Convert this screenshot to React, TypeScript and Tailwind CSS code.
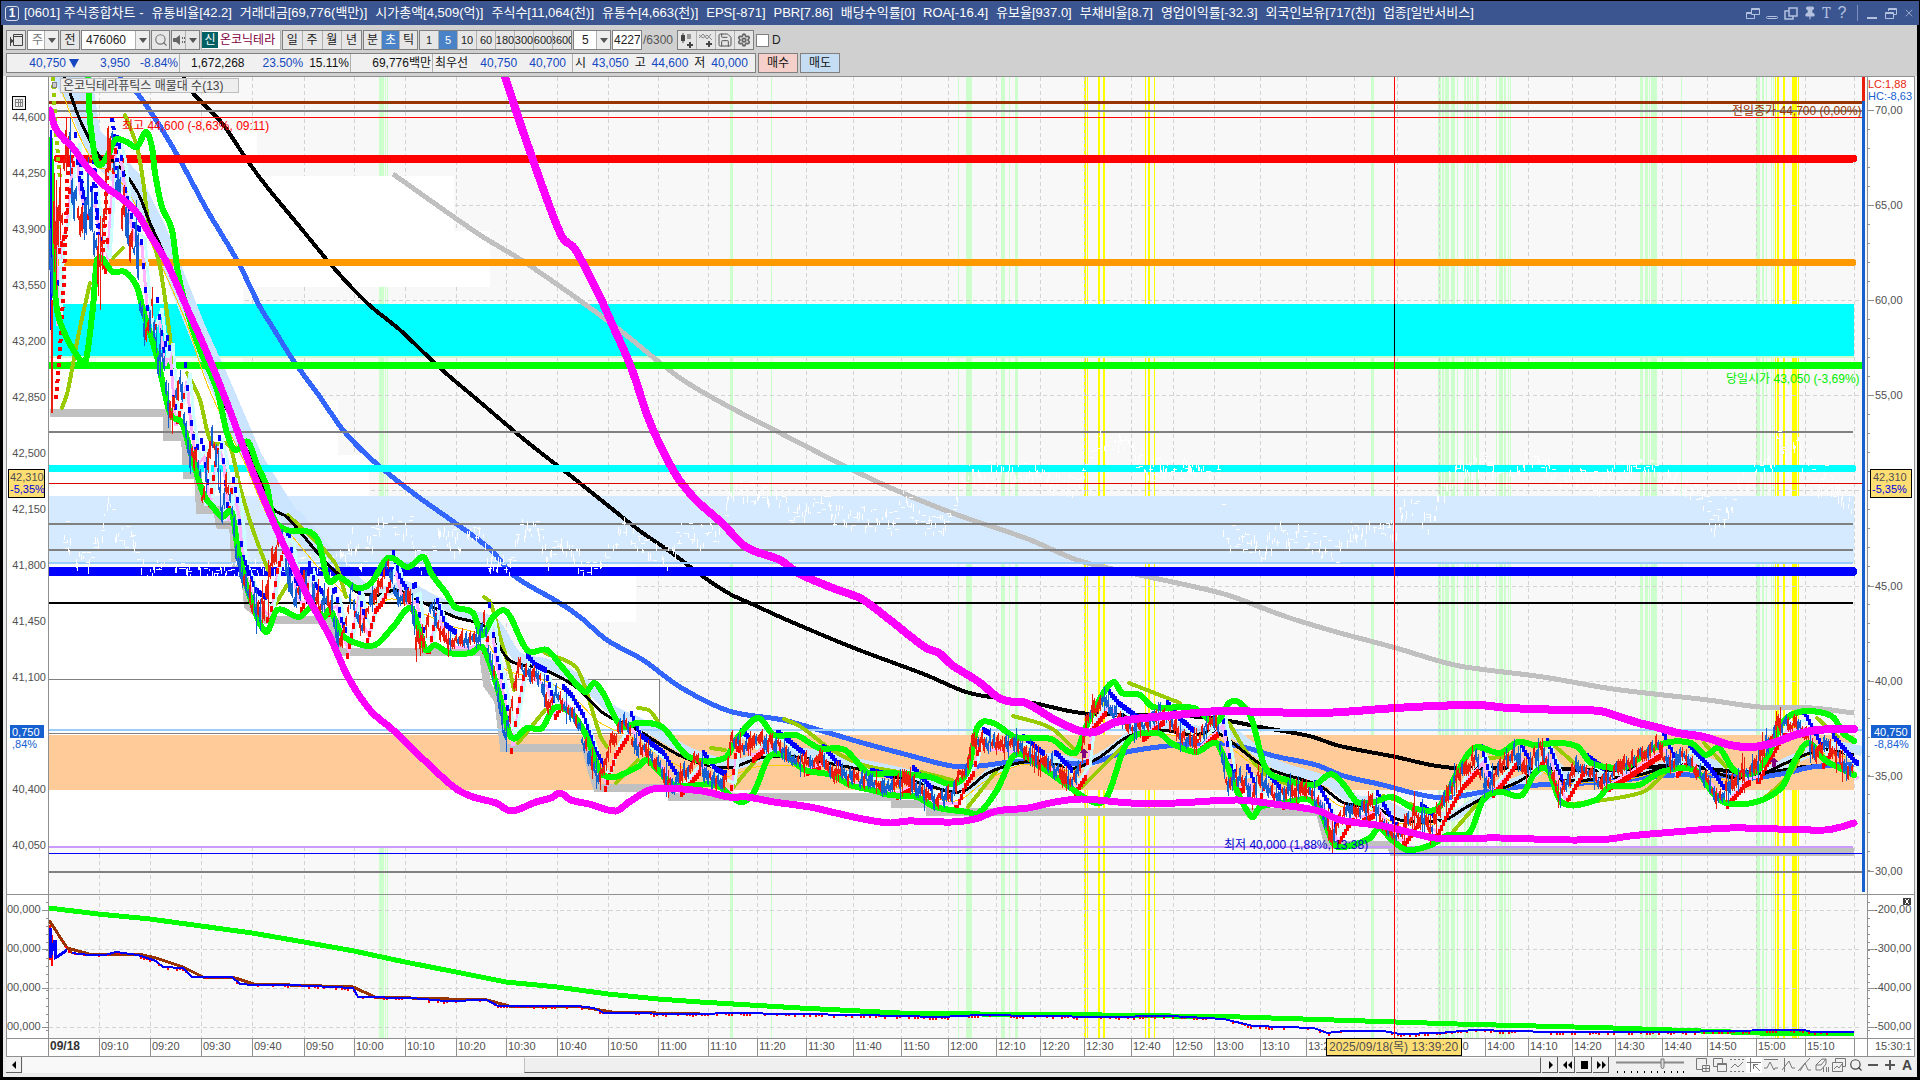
import { useMemo } from 'react';
import type { ReactNode } from 'react';
import { Search, Save, Settings, Pin, X } from 'lucide-react';

type Pt = [number, number];

const FONT = '"Liberation Sans", "Noto Sans CJK KR", sans-serif';

const titleItems = [
  '[0601] 주식종합차트 -',
  '유통비율[42.2]',
  '거래대금[69,776(백만)]',
  '시가총액[4,509(억)]',
  '주식수[11,064(천)]',
  '유통수[4,663(천)]',
  'EPS[-871]',
  'PBR[7.86]',
  '배당수익률[0]',
  'ROA[-16.4]',
  '유보율[937.0]',
  '부채비율[8.7]',
  '영업이익률[-32.3]',
  '외국인보유[717(천)]',
  '업종[일반서비스]',
];

const gridX = [
  99, 150, 201, 252, 304, 354, 405, 456, 506, 557, 608, 658, 708, 757, 806, 853, 901, 948, 996, 1040, 1084,
  1131, 1173, 1214, 1260, 1306, 1354, 1397, 1439, 1485, 1528, 1572, 1615, 1662, 1707, 1756, 1805, 1854,
];
const gridY = [110, 205, 300, 395, 490, 586, 681, 776, 871];
const lowerGridY = [910, 949, 988, 1027];

const greenBars: Pt[] = [
  [379, 5], [385, 1], [387, 1], [730, 3], [771, 1], [958, 1], [966, 6], [1001, 4], [1009, 1], [1015, 3],
  [1371, 3], [1438, 3], [1442, 2], [1445, 4], [1451, 4], [1457, 1], [1464, 2], [1467, 2], [1470, 1],
  [1472, 1], [1476, 3], [1496, 1], [1499, 4], [1504, 2], [1508, 1], [1510, 1], [1640, 3], [1645, 3],
  [1649, 1], [1651, 6], [1681, 1], [1756, 4], [1762, 2], [1766, 1], [1771, 1], [1773, 1],
];
const yellowBars: Pt[] = [
  [1084, 2], [1087, 1], [1098, 2], [1103, 2], [1145, 1], [1148, 2], [1154, 1], [1775, 1], [1777, 2],
  [1783, 2], [1792, 5], [1798, 1],
];

// x end, top, height
const profile: [number, number, number][] = [
  [257, 132, 44], [454, 176, 55], [490, 231, 56], [243, 287, 82], [320, 369, 31], [338, 400, 55],
  [369, 455, 56], [636, 566, 56], [480, 622, 57], [659, 679, 56], [890, 790, 56],
];

// y, width, colour, x end
const levels: [number, number, string, number][] = [
  [101, 3, '#993300', 1862], [110, 2, '#808080', 1862], [117, 1, '#ff0000', 1862],
  [431, 2, '#808080', 1853], [523, 2, '#808080', 1853], [549, 2, '#808080', 1853],
  [562, 2, '#99ccff', 1853], [602, 2, '#000000', 1853], [729, 2, '#99ccff', 1862],
  [846, 2, '#cc99ff', 1853], [853, 1, '#0000ff', 1862], [871, 2, '#808080', 1862],
];
const bands: [number, number, string, number][] = [
  [158, 8, '#ff0000', 1853], [262, 7, '#ff9900', 1853], [365, 7, '#00ff00', 1860],
  [468, 7, '#00ffff', 1853], [571, 9, '#0000ff', 1853],
];

const magentaUpper: Pt[] = [
  [505, 77], [526, 140], [561, 235], [575, 249], [600, 297], [612, 324], [631, 367], [649, 420], [667, 459],
  [680, 481], [696, 500], [722, 523], [746, 547], [780, 560], [798, 573], [830, 587], [860, 598], [872, 606],
  [890, 620], [926, 648], [939, 653],
  [952, 665], [979, 682], [999, 698], [1013, 702], [1026, 703], [1055, 720], [1080, 731], [1095, 732],
  [1113, 723], [1135, 719], [1176, 715], [1220, 711], [1265, 712], [1322, 713], [1396, 708], [1435, 706],
  [1478, 705], [1509, 708], [1565, 710], [1600, 711], [1617, 716], [1639, 723], [1656, 727], [1678, 733],
  [1704, 737], [1730, 745], [1752, 747], [1773, 743], [1795, 735], [1817, 730], [1854, 729],
];
const magentaLower: Pt[] = [
  [50, 110], [55, 127], [63, 138], [73, 148], [87, 167], [107, 188], [120, 197], [137, 213], [150, 235],
  [167, 263], [187, 308], [207, 353], [227, 403], [247, 457], [263, 497], [280, 537], [290, 558], [308, 597],
  [330, 637], [348, 677], [370, 710], [393, 730], [424, 760], [455, 788], [473, 797], [496, 803], [511, 811],
  [536, 802], [551, 798], [560, 793], [571, 800], [589, 804], [616, 811], [629, 802], [653, 789], [702, 791],
  [729, 797], [747, 797], [774, 802], [810, 807], [836, 813], [863, 819], [890, 823], [908, 821], [952, 822],
  [975, 819], [997, 811], [1028, 808], [1055, 802], [1082, 799], [1131, 803], [1176, 803], [1238, 800],
  [1274, 804], [1310, 809], [1322, 812], [1340, 820], [1383, 826], [1413, 833], [1435, 838], [1500, 838],
  [1570, 840], [1609, 839], [1630, 836], [1674, 832], [1730, 828], [1778, 829], [1825, 830], [1841, 827],
  [1854, 823],
];
const grayLong: Pt[] = [
  [393, 174], [480, 235], [526, 263], [612, 324], [686, 382], [784, 435], [882, 484], [955, 514], [1028, 539],
  [1077, 560], [1126, 572], [1224, 594], [1273, 612], [1296, 620], [1340, 633], [1396, 648], [1439, 661],
  [1465, 667], [1543, 677], [1613, 689], [1708, 700], [1760, 707], [1812, 708], [1854, 713],
];
const blackLong: Pt[] = [
  [183, 77], [192, 92], [222, 123], [247, 160], [267, 187], [300, 227], [333, 267], [367, 303], [400, 330],
  [440, 368], [480, 402], [526, 441], [576, 480], [611, 508], [640, 531], [672, 553], [705, 578], [730, 594],
  [752, 604], [787, 620],
  [854, 648], [926, 675], [966, 692], [997, 698], [1033, 703], [1069, 711], [1091, 714], [1158, 715],
  [1211, 718], [1265, 728], [1309, 736], [1340, 746], [1396, 757], [1431, 765], [1457, 768], [1522, 768],
  [1609, 770], [1674, 766], [1739, 772], [1773, 772], [1804, 767], [1854, 765],
];
const blueLong: Pt[] = [
  [118, 77], [137, 93], [158, 123], [180, 160], [207, 210], [238, 262], [260, 307], [270, 323], [293, 360],
  [320, 397], [343, 430], [370, 458], [413, 493], [451, 520], [491, 550], [513, 575], [558, 602], [580, 617],
  [607, 640], [643, 660], [680, 687], [729, 711], [783, 720], [819, 730], [863, 743], [908, 755], [952, 766],
  [979, 766], [1011, 762], [1042, 762], [1069, 763], [1095, 762], [1122, 753], [1167, 746], [1216, 743],
  [1247, 748], [1274, 756], [1316, 765], [1344, 776], [1383, 785], [1413, 793], [1444, 798], [1483, 792],
  [1518, 787], [1552, 784], [1609, 782], [1639, 778], [1674, 775], [1726, 776], [1760, 777], [1786, 773],
  [1812, 767], [1854, 764],
];
const blackShort: Pt[] = [
  [64, 77], [70, 93], [80, 120], [100, 157], [115, 162], [138, 193], [150, 223], [167, 260], [190, 313],
  [213, 380], [247, 450], [272, 507], [287, 517], [322, 558], [339, 575], [357, 592], [379, 595], [397, 590],
  [424, 603], [455, 617], [487, 628], [509, 660], [540, 668], [576, 687], [603, 713], [634, 728], [683, 757],
  [727, 768], [760, 758], [796, 757], [828, 763], [863, 770], [917, 782], [952, 792], [966, 790], [988, 773],
  [1024, 762], [1051, 763], [1075, 768], [1100, 757], [1127, 737], [1158, 730], [1194, 735], [1216, 732],
  [1265, 767], [1310, 782], [1322, 787], [1344, 803], [1374, 807], [1400, 820], [1444, 820], [1465, 808],
  [1492, 793], [1518, 782], [1544, 768], [1561, 780], [1609, 778], [1639, 775], [1674, 765], [1700, 767],
  [1734, 778], [1760, 775], [1786, 763], [1821, 750], [1854, 755],
];
const limeUpper: Pt[] = [
  [88, 77], [90, 120], [97, 163], [108, 155], [115, 140], [127, 142], [137, 147], [146, 132], [152, 147],
  [155, 173], [162, 207], [172, 230], [178, 273], [187, 310], [200, 350], [217, 390], [227, 433], [235, 450],
  [248, 442], [258, 467], [267, 487], [273, 517], [287, 530], [310, 532], [319, 543], [328, 580], [339, 577],
  [357, 588], [371, 583], [388, 558], [408, 567], [424, 557], [431, 573], [446, 593], [455, 607], [473, 613],
  [482, 635], [493, 617], [507, 612], [527, 650], [547, 650], [562, 667], [585, 692], [594, 683], [603, 693],
  [620, 725], [638, 723], [662, 727], [689, 757], [725, 758], [738, 737], [758, 718], [774, 735], [796, 735],
  [819, 748], [845, 750], [868, 773], [890, 773], [930, 777], [952, 784], [968, 770], [977, 728], [993, 723],
  [1015, 737], [1051, 739], [1075, 753], [1086, 727], [1104, 692], [1114, 682], [1122, 693], [1140, 695],
  [1153, 707], [1194, 708], [1216, 723], [1229, 703], [1240, 703], [1252, 720], [1265, 767], [1287, 780],
  [1314, 785], [1331, 774], [1344, 785], [1357, 802], [1374, 802], [1392, 797], [1413, 808], [1435, 810],
  [1444, 800], [1457, 773], [1474, 748], [1500, 753], [1518, 742], [1535, 745], [1557, 743], [1578, 747],
  [1591, 763], [1626, 767], [1643, 755], [1665, 743], [1691, 743], [1706, 755], [1719, 748], [1734, 770],
  [1756, 772], [1769, 753], [1782, 723], [1799, 712], [1819, 712], [1834, 718], [1843, 733], [1854, 741],
];
const limeLower: Pt[] = [
  [50, 140], [52, 213], [55, 293], [62, 327], [80, 360], [86, 360], [93, 307], [97, 260], [113, 272],
  [125, 272], [137, 287], [143, 310], [157, 357], [170, 413], [182, 423], [190, 450], [203, 493], [213, 507],
  [222, 517], [232, 513], [238, 550], [250, 597], [266, 632], [277, 610], [299, 617], [312, 607], [324, 617],
  [330, 610], [341, 633], [353, 642], [375, 645], [393, 627], [411, 608], [420, 633], [426, 650], [435, 645],
  [449, 653], [471, 653], [482, 647], [491, 667], [500, 697], [511, 737], [527, 728], [542, 728], [554, 708],
  [571, 713], [585, 733], [603, 775], [638, 767], [647, 760], [674, 785], [716, 785], [740, 802], [754, 792],
  [769, 757], [787, 757], [805, 770], [832, 775], [850, 785], [872, 790], [890, 795], [917, 797], [935, 807],
  [968, 812], [979, 813], [997, 790], [1015, 755], [1042, 768], [1064, 783], [1093, 802], [1107, 797],
  [1127, 743], [1158, 733], [1171, 743], [1196, 752], [1216, 743], [1225, 760], [1238, 793], [1252, 817],
  [1260, 807], [1283, 803], [1310, 800], [1323, 817], [1333, 843], [1344, 847], [1370, 838], [1379, 828],
  [1392, 840], [1407, 850], [1431, 845], [1448, 835], [1470, 832], [1483, 800], [1500, 792], [1522, 795],
  [1535, 773], [1548, 770], [1561, 802], [1596, 800], [1609, 787], [1639, 785], [1661, 772], [1695, 770],
  [1713, 793], [1726, 803], [1756, 802], [1782, 787], [1795, 760], [1808, 743], [1825, 760], [1854, 775],
];
const olive: Pt[][] = [
  [[125, 115], [137, 147], [143, 180], [148, 220], [160, 267], [167, 313], [173, 363]],
  [[187, 373], [200, 400], [210, 440], [230, 447], [240, 487], [253, 530], [268, 570]],
  [[62, 408], [68, 390], [78, 337], [90, 283]],
  [[113, 258], [123, 248]],
  [[288, 515], [335, 563], [346, 597]],
  [[275, 605], [287, 585]],
  [[484, 597], [491, 604], [500, 637], [509, 667], [514, 690]],
  [[518, 743], [545, 710]],
  [[545, 653], [576, 667], [586, 690], [600, 735], [607, 747]],
  [[616, 783], [638, 760]],
  [[638, 708], [650, 711], [660, 725]],
  [[711, 748], [725, 750]],
  [[731, 790], [756, 760]],
  [[784, 719], [801, 727], [832, 750], [863, 765], [899, 772]],
  [[921, 772], [952, 780]],
  [[968, 807], [997, 770]],
  [[1013, 716], [1051, 728], [1075, 750]],
  [[1082, 787], [1122, 747]],
  [[1129, 683], [1180, 703]],
  [[1229, 723], [1247, 753], [1266, 775], [1288, 784]],
  [[1383, 796], [1413, 805]],
  [[1452, 833], [1483, 797]],
  [[1483, 758], [1509, 757]],
  [[1548, 740], [1574, 763]],
  [[1574, 804], [1643, 792], [1665, 773]],
  [[1704, 743], [1726, 767]],
  [[1760, 802], [1791, 773], [1804, 747]],
  [[1817, 718], [1838, 737]],
];
const lowStep: Pt[] = [
  [50, 413], [167, 413], [167, 437], [185, 437], [187, 475], [198, 475], [200, 510], [217, 510], [220, 525],
  [233, 525], [236, 572], [245, 574], [248, 606], [266, 620], [331, 620], [336, 640], [341, 652], [483, 652],
  [487, 685], [498, 700], [504, 748], [586, 748], [590, 765], [597, 788], [672, 788], [672, 797], [895, 797],
  [895, 804], [930, 804], [930, 812], [1320, 812], [1328, 845], [1391, 845], [1393, 852], [1854, 852],
];
const price: Pt[] = [
  [49, 200], [51, 320], [54, 240], [60, 220], [66, 160], [70, 145], [73, 185], [80, 210], [88, 195], [96, 250],
  [100, 260], [104, 200], [110, 140], [115, 160], [120, 200], [128, 235], [135, 240], [140, 300], [144, 335],
  [152, 310], [158, 360], [163, 345], [169, 420], [175, 400], [180, 375], [184, 420], [190, 460], [197, 450],
  [203, 500], [212, 440], [217, 460], [222, 515], [226, 480], [232, 510], [237, 565], [243, 580], [250, 600],
  [264, 610], [272, 560], [278, 540], [284, 545], [290, 590], [297, 600], [303, 570], [310, 595], [320, 605],
  [330, 600], [336, 630], [342, 645], [348, 615], [352, 590], [357, 620], [362, 630], [370, 600], [378, 590],
  [388, 563], [395, 590], [402, 600], [410, 595], [416, 640], [424, 640], [430, 605], [440, 635], [450, 642],
  [480, 640], [484, 615], [490, 660], [497, 690], [506, 740], [512, 700], [519, 662], [530, 675], [540, 680],
  [548, 710], [556, 695], [566, 705], [578, 725], [590, 760], [600, 778], [610, 745], [625, 722], [635, 745],
  [658, 763], [673, 787], [696, 760], [711, 780], [725, 785], [731, 737], [747, 750], [758, 740], [774, 743],
  [798, 763], [819, 757], [832, 773], [863, 780], [890, 787], [908, 778], [926, 798], [952, 797], [959, 777],
  [968, 763], [973, 737], [984, 743], [1019, 747], [1037, 763], [1051, 763], [1069, 783], [1080, 767],
  [1086, 720], [1102, 700], [1113, 713], [1136, 730], [1160, 710], [1176, 730], [1191, 743], [1216, 720],
  [1227, 783], [1243, 777], [1252, 800], [1258, 777], [1274, 797], [1296, 790], [1312, 793], [1323, 813],
  [1331, 837], [1346, 810], [1357, 810], [1372, 803], [1390, 835], [1400, 833], [1413, 813], [1431, 827],
  [1444, 800], [1457, 777], [1476, 757], [1485, 787], [1500, 770], [1513, 750], [1524, 770], [1541, 748],
  [1559, 795], [1578, 763], [1600, 780], [1622, 767], [1658, 743], [1669, 767], [1682, 753], [1704, 777],
  [1719, 798], [1741, 773], [1754, 770], [1762, 753], [1778, 725], [1799, 722], [1817, 757], [1825, 743],
  [1851, 773],
];
const turnover: Pt[] = [
  [49, 908], [98, 914], [150, 919], [201, 926], [252, 933], [304, 942], [354, 951], [405, 962], [456, 972],
  [506, 982], [557, 987], [608, 994], [658, 999], [700, 1002], [800, 1008], [900, 1013], [980, 1014],
  [1102, 1015], [1240, 1017], [1396, 1022], [1457, 1024], [1613, 1028], [1760, 1033], [1854, 1033],
];
const flow: Pt[] = [
  [49, 920], [67, 948], [72, 953], [89, 955], [105, 955], [116, 952], [138, 955], [156, 961], [163, 967],
  [183, 968], [192, 977], [232, 977], [240, 984], [254, 985], [290, 985], [353, 988], [358, 997], [411, 998],
  [446, 1001], [487, 1000], [498, 1006], [576, 1006], [594, 1008], [604, 1013], [700, 1014], [730, 1013],
  [860, 1015], [940, 1017], [980, 1015], [1102, 1017], [1170, 1016], [1224, 1019], [1253, 1026], [1314, 1028],
  [1327, 1033], [1344, 1031], [1383, 1031], [1400, 1034], [1439, 1033], [1474, 1030], [1552, 1032],
  [1674, 1032], [1778, 1030], [1804, 1030], [1812, 1032], [1854, 1032],
];
const slowFlow: Pt[] = [
  [49, 920], [67, 948], [89, 954], [138, 954], [156, 958], [183, 967], [203, 977], [232, 977], [254, 984],
  [290, 985], [353, 987], [375, 997], [411, 998], [487, 1000], [509, 1006], [576, 1006], [612, 1012], [700, 1014],
];
const traceLine: Pt[] = [
  [49, 575], [62, 560], [66, 530], [72, 550], [90, 560], [104, 520], [109, 500], [116, 540], [130, 535],
  [140, 565], [180, 572], [230, 570], [300, 565], [345, 560], [352, 535], [360, 560], [375, 530], [388, 505],
  [400, 535], [410, 520], [418, 560], [430, 560], [440, 530], [460, 545], [480, 530], [488, 558], [510, 562],
  [520, 525], [538, 530], [548, 560], [560, 540], [575, 555], [595, 572], [610, 545], [625, 525], [640, 545],
  [672, 556], [680, 525], [700, 535], [722, 530], [728, 495], [740, 488], [780, 495], [790, 512], [800, 515],
  [822, 500], [835, 515], [870, 515], [895, 522], [903, 500], [925, 525], [945, 522], [952, 500], [970, 470],
  [1000, 474], [1030, 466], [1060, 485], [1080, 480], [1100, 440], [1120, 440], [1150, 470], [1190, 466],
  [1218, 470], [1224, 530], [1240, 540], [1262, 550], [1280, 530], [1300, 535], [1320, 545], [1335, 555],
  [1350, 530], [1380, 530], [1395, 525], [1410, 500], [1430, 520], [1450, 475], [1480, 460], [1510, 475],
  [1530, 460], [1560, 475], [1600, 480], [1645, 462], [1660, 465], [1667, 480], [1690, 485], [1705, 502],
  [1713, 523], [1730, 502], [1740, 485], [1755, 468], [1772, 465], [1778, 440], [1790, 455], [1798, 442],
  [1802, 465], [1812, 470], [1818, 490], [1825, 475], [1840, 495], [1853, 505],
];

const axisTimes = [
  '09:10', '09:20', '09:30', '09:40', '09:50', '10:00', '10:10', '10:20', '10:30', '10:40', '10:50', '11:00',
  '11:10', '11:20', '11:30', '11:40', '11:50', '12:00', '12:10', '12:20', '12:30', '12:40', '12:50', '13:00',
  '13:10', '13:20', '13:30', '13:40', '13:50', '14:00', '14:10', '14:20', '14:30', '14:40', '14:50', '15:00',
  '15:10',
];
const leftPrices = [
  '44,600', '44,250', '43,900', '43,550', '43,200', '42,850', '42,500', '42,150', '41,800', '41,450', '41,100',
  '', '40,400', '40,050',
];
const rightPrices = ['70,00', '65,00', '60,00', '55,00', '', '45,00', '40,00', '35,00', '30,00'];

function line(points: Pt[]) {
  return points.map(([x, y]) => `${x},${y}`).join(' ');
}

function curve(points: Pt[]) {
  let d = `M${points[0][0]} ${points[0][1]}`;
  for (let i = 1; i < points.length; i++) {
    const before = points[i - 2] ?? points[i - 1];
    const from = points[i - 1];
    const to = points[i];
    const after = points[i + 1] ?? to;
    const step = (to[0] - from[0]) / 3;
    const k0 = (to[1] - before[1]) / (to[0] - before[0] || 1);
    const k1 = (after[1] - from[1]) / (after[0] - from[0] || 1);
    d += `C${from[0] + step} ${from[1] + k0 * step} ${to[0] - step} ${to[1] - k1 * step} ${to[0]} ${to[1]}`;
  }
  return d;
}

function random(seed: number) {
  let s = seed;
  return () => {
    s = (s * 1664525 + 1013904223) % 4294967296;
    return s / 4294967296;
  };
}

function at(points: Pt[], x: number) {
  for (let i = 1; i < points.length; i++) {
    if (x <= points[i][0]) {
      const [x0, y0] = points[i - 1];
      const [x1, y1] = points[i];
      return y0 + ((x - x0) / (x1 - x0 || 1)) * (y1 - y0);
    }
  }
  return points[points.length - 1][1];
}

function buildCandles() {
  const rnd = random(7);
  const out = { upBody: '', downBody: '', upWick: '', downWick: '', above: '', below: '' };
  for (let x = 50; x < 1853; x += 2) {
    const y = at(price, x);
    const slope = at(price, x + 4) - at(price, x - 4);
    const amp = x < 140 ? 66 : x < 350 ? 26 : 16;
    const mid = y + (rnd() - 0.5) * amp * 0.6;
    const half = 2 + rnd() * amp * 0.3;
    const tail = half + (rnd() > 0.7 ? rnd() * amp * 0.8 : 2);
    const top = Math.max(118, Math.round(mid - tail));
    const body = `M${x} ${Math.round(Math.max(120, mid - half))}V${Math.round(mid + half)}`;
    const wick = `M${x}.5 ${top}V${Math.round(mid + tail)}`;
    if (rnd() > 0.45 + slope / 120) {
      out.upBody += body;
      out.upWick += wick;
    } else {
      out.downBody += body;
      out.downWick += wick;
    }
    if (slope > 2) out.above += `M${x + 5} ${Math.round(y - 13)}v6`;
    if (slope < -2) out.below += `M${x + 5} ${Math.round(y + 8)}v6`;
  }
  return out;
}

function buildTrace() {
  const rnd = random(31);
  let d = '';
  for (let x = 60; x < 1853; x += 1) {
    if (rnd() < 0.35) continue;
    const y = Math.round(at(traceLine, x) + (rnd() - 0.5) * 22);
    d += rnd() > 0.7 ? `M${x} ${y}h4` : `M${x}.5 ${y}v${Math.round(rnd() * 7 + 2)}`;
  }
  return d;
}

function buildFlowNoise() {
  const rnd = random(11);
  let d = 'M50 925V960M52 935V966';
  for (let x = 54; x < 1853; x += 3) {
    const y = Math.round(at(flow, x));
    d += `M${x} ${y}v${Math.round((rnd() - 0.3) * 5)}`;
  }
  return d;
}

function Chart() {
  const candles = useMemo(buildCandles, []);
  const trace = useMemo(buildTrace, []);
  const flowNoise = useMemo(buildFlowNoise, []);
  const cloud = blackShort.map(([x, y]): Pt => [x + 8, y - 4]);
  const gold = blackShort.map(([x, y]): Pt => [x - 4, x < 1000 ? y + 9 : y + 3]);
  const pricePink = price.map(([x, y]): Pt => [x + 7, y + 6]);
  const priceCyan = price.map(([x, y]): Pt => [x + 10, y - 2]);

  return (
    <svg
      viewBox="6 76 1909 981"
      className="block h-auto w-full bg-white"
      fontFamily={FONT}
      fontSize="11"
      fill="none"
      shapeRendering="crispEdges"
      role="img"
      aria-label="온코닉테라퓨틱스 차트"
    >
      <clipPath id="plot">
        <rect x="49" y="77" width="1813" height="961" />
      </clipPath>
      <rect x="49" y="77" width="1818" height="961" fill="#f8f8f8" />

      <g clipPath="url(#plot)">
        {greenBars.map(([x, w]) => (
          <rect key={x} x={x} y="77" width={w} height="961" fill="#ccffcc" />
        ))}
        {yellowBars.map(([x, w]) => (
          <rect key={x} x={x} y="77" width={w} height="961" fill="#ffff00" />
        ))}
        <g stroke="#d3d3d3" strokeDasharray="4 3">
          {gridX.map((x) => (
            <path key={x} d={`M${x}.5 77V1038`} />
          ))}
          {[...gridY, ...lowerGridY].map((y) => (
            <path key={y} d={`M49 ${y}.5H1867`} />
          ))}
        </g>

        {profile.map(([x, y, h]) => (
          <rect key={y} x="49" y={y} width={x - 49} height={h} fill="#ffffff" />
        ))}
        <rect x="53" y="304" width="1801" height="52" fill="#00ffff" />
        <rect x="49" y="356" width="1805" height="2" fill="#ccffcc" />
        <rect x="49" y="496" width="1805" height="67" fill="#d6eaff" />
        <path d="M49 679.5H659.5V733.5H49" stroke="#808080" />
        <rect x="49" y="735" width="1805" height="55" fill="#ffcc99" />

        <path d="M52 77H92L100 130L140 175L165 225L205 325L230 380L262 455L290 500L330 560L300 545L270 505L240 455L205 375L165 275L135 205L90 160L70 110Z" fill="#cbe4ff" />
        <polyline points={line(lowStep)} stroke="#c0c0c0" strokeWidth="8" />
        <path d={curve(cloud.slice(12))} stroke="#cbe4ff" strokeWidth="10" />
        <path d={curve(grayLong)} stroke="#c0c0c0" strokeWidth="5" />
        <path d={curve(blackLong)} stroke="#000000" strokeWidth="4" />
        <path d={curve(blueLong)} stroke="#3366ff" strokeWidth="5" />
        {levels.map(([y, w, color, end]) => (
          <rect key={y} x="49" y={y} width={end - 49} height={w} fill={color} />
        ))}
        {bands.map(([y, w, color, end]) => (
          <path key={y} d={`M${y === 158 ? 58 : 49} ${y}.5H${end}`} stroke={color} strokeWidth={w} strokeLinecap="round" />
        ))}
        <path d={trace} stroke="#ffffff" />

        <path d={curve(gold)} stroke="#ffcc00" strokeWidth="1" />
        {olive.map((points) => (
          <path key={points[0].join()} d={curve(points)} stroke="#99cc00" strokeWidth="4" strokeLinecap="round" />
        ))}
        <path d="M53 77L55 120L60 180" stroke="#99cc00" strokeWidth="4" strokeDasharray="4 4" />
        <path d={curve(blackShort)} stroke="#000000" strokeWidth="3" />
        <polyline points={line(pricePink)} stroke="#ffb3ff" strokeWidth="3" />
        <polyline points={line(priceCyan)} stroke="#ccffff" strokeWidth="3" />
        <path d="M68 155L67 200L63 300L60 350L56 400M108 160L105 220L102 265" stroke="#ff0000" strokeWidth="4" strokeDasharray="4 4" />
        <path d="M80 155L82 190L84 205M94 160L96 195L98 235M112 118L116 145L118 190" stroke="#0000ff" strokeWidth="4" strokeDasharray="4 4" />
        <path d={candles.above} stroke="#0000ff" strokeWidth="3" />
        <path d={candles.below} stroke="#ff0000" strokeWidth="3" />
        <g strokeLinejoin="round" strokeLinecap="round">
          <path d={curve(limeLower)} stroke="#00ff00" strokeWidth="6" />
          <path d={curve(limeUpper)} stroke="#00ff00" strokeWidth="6" />
        </g>
        <path d="M50.5 130V330" stroke="#0000ff" strokeWidth="2" />
        <path d="M52 300V413" stroke="#e91e0c" strokeWidth="2" />
        <path d={candles.upBody} stroke="#e91e0c" strokeWidth="2" />
        <path d={candles.downBody} stroke="#1660d0" strokeWidth="2" />
        <path d={candles.upWick} stroke="#e91e0c" />
        <path d={candles.downWick} stroke="#1660d0" />
        <g strokeLinejoin="round" strokeLinecap="round">
          <path d={curve(magentaLower)} stroke="#ff00ff" strokeWidth="7" />
          <path d={curve(magentaUpper)} stroke="#ff00ff" strokeWidth="8" />
          <path d="M700 571.5H1853" stroke="#0000ff" strokeWidth="9" />
        </g>
        <path d="M1084 748l4 5h-2v5h-4v-5h-2zM1774 757l4 5h-2v5h-4v-5h-2z" fill="#800080" />
        <rect x="49" y="483" width="1813" height="1" fill="#e00000" />

        <polyline points={line(turnover)} stroke="#00ff00" strokeWidth="5" />
        <polyline points={line(slowFlow)} stroke="#993300" strokeWidth="3" />
        <polyline points={line(flow)} stroke="#993300" strokeWidth="2" />
        <path d={flowNoise} stroke="#ff0000" strokeWidth="2" />
        <path d="M50 928V958L55 940V958L60 955L67 950" stroke="#0000ff" strokeWidth="3" />
        <polyline points={line(flow.slice(2))} stroke="#0000ff" strokeWidth="2" />
        <rect x="1394" y="77" width="1" height="961" fill="#ff0000" />
        <rect x="1394" y="304" width="1" height="52" fill="#000000" />

        <g fontSize="12">
          <text x="122" y="130" fill="#ff0000">최고 44,600 (-8,63%, 09:11)</text>
          <text x="1732" y="115" fill="#993300">전일종가 44,700 (0,00%)</text>
          <text x="1726" y="383" fill="#00ee00">당일시가 43,050 (-3,69%)</text>
          <text x="1224" y="849" fill="#0000cc">최저 40,000 (1,88%, 13:38)</text>
        </g>
        <rect x="60.5" y="78.5" width="178" height="14" fill="#eeeeee" stroke="#bdbdbd" />
        <text x="63" y="90" fontSize="12" fill="#444444">온코닉테라퓨틱스 매물대 수(13)</text>
        <rect x="52.5" y="82.5" width="4" height="5" fill="#cccccc" stroke="#808080" />
      </g>

      <rect x="1862" y="77" width="3" height="24" fill="#e91e0c" />
      <rect x="1862" y="101" width="3" height="791" fill="#1660d0" />
      <g fill="#909090">
        <rect x="6" y="76" width="1909" height="1" />
        <rect x="6" y="76" width="1" height="981" />
        <rect x="1914" y="76" width="1" height="981" />
        <rect x="48" y="77" width="1" height="979" />
        <rect x="1867" y="77" width="1" height="979" />
        <rect x="6" y="894" width="1909" height="1" />
        <rect x="6" y="1038" width="1909" height="1" />
        <rect x="6" y="1056" width="1909" height="1" />
        {gridX.map((x) => (
          <rect key={x} x={x} y="1038" width="1" height="18" />
        ))}
        {gridY.map((y) => (
          <rect key={y} x="1867" y={y} width="7" height="1" />
        ))}
        {Array.from({ length: 41 }, (_, i) => (
          <rect key={i} x="1867" y={110 + i * 19} width="3" height="1" />
        ))}
        {lowerGridY.map((y) => (
          <g key={y}>
            <rect x="42" y={y} width="7" height="1" />
            <rect x="1867" y={y} width="7" height="1" />
          </g>
        ))}
        {Array.from({ length: 18 }, (_, i) => (
          <g key={i}>
            <rect x="46" y={902 + i * 8} width="3" height="1" />
            <rect x="1867" y={902 + i * 8} width="3" height="1" />
          </g>
        ))}
      </g>

      <g fill="#505050">
        {leftPrices.map((t, i) => (
          <text key={t} x="46" y={121 + i * 56} textAnchor="end">{t}</text>
        ))}
        {rightPrices.map((t, i) => (
          <text key={gridY[i]} x="1875" y={gridY[i] + 4}>{t}</text>
        ))}
        {['-200,00', '-300,00', '-400,00', '-500,00'].map((t, i) => (
          <g key={t}>
            <text x="7" y={lowerGridY[i] + 3}>00,000</text>
            <text x="1874" y={lowerGridY[i] + 3}>{t}</text>
          </g>
        ))}
        <text x="50" y="1050" fontSize="12" fontWeight="bold" fill="#333333">09/18</text>
        {axisTimes.map((t, i) => (
          <text key={t} x={gridX[i] + 2} y="1050">{t}</text>
        ))}
        <text x="1875" y="1050">15:30:1</text>
      </g>
      <text x="1868" y="88" fill="#e91e0c">LC:1,88</text>
      <text x="1868" y="100" fill="#1660d0">HC:-8,63</text>

      <g>
        <rect x="12.5" y="96.5" width="13" height="13" fill="#f0f0f0" stroke="#000000" />
        <path d="M15.5 99.5h7v7h-7zM15.5 102.5h7M18.5 99.5v7M20.5 99.5v7" stroke="#808080" />
        <rect x="8.5" y="469.5" width="36" height="28" fill="#ffdf74" stroke="#000000" />
        <text x="10" y="481" fill="#505050">42,310</text>
        <text x="10" y="493" fill="#0000e0">-5,35%</text>
        <rect x="1870.5" y="469.5" width="41" height="28" fill="#ffdf74" stroke="#000000" />
        <text x="1873" y="481" fill="#505050">42,310</text>
        <text x="1872" y="493" fill="#0000e0">-5,35%</text>
        <rect x="10" y="725" width="34" height="13" fill="#1660d0" />
        <text x="12" y="736" fill="#ffffff">0,750</text>
        <text x="12" y="748" fill="#1660d0">,84%</text>
        <rect x="1871" y="725" width="40" height="13" fill="#1660d0" />
        <text x="1874" y="736" fill="#ffffff">40,750</text>
        <text x="1874" y="748" fill="#1660d0">-8,84%</text>
        <rect x="1903" y="898" width="8" height="7" fill="#404040" />
        <path d="M1905 899l4 5M1909 899l-4 5" stroke="#ffffff" />
        <rect x="1326.5" y="1038.5" width="135" height="17" fill="#ffdf74" stroke="#000000" />
        <text x="1329" y="1051" fontSize="12" fill="#505050">2025/09/18(목) 13:39:20</text>
      </g>
    </svg>
  );
}

function ToolButton({ children, active, label }: { children: ReactNode; active?: boolean; label?: string }) {
  return (
    <button
      aria-label={label}
      className={`flex h-full min-w-0 flex-1 items-center justify-center overflow-hidden border-r border-[#b0b0b0] whitespace-nowrap last:border-r-0 ${
        active ? 'bg-[#4a82c8] text-white' : 'bg-[#e6e6e6]'
      }`}
    >
      {children}
    </button>
  );
}

function Group({ className, children }: { className: string; children: ReactNode }) {
  return <div className={`flex h-5 shrink-0 border border-[#808080] bg-[#e6e6e6] ${className}`}>{children}</div>;
}

function Arrow() {
  return (
    <svg viewBox="0 0 8 5" className="h-[5px] w-2 shrink-0" aria-hidden="true">
      <path d="M0 0h8L4 5z" fill="#555" />
    </svg>
  );
}

function Combo({ value, label, className }: { value: string; label: string; className: string }) {
  return (
    <div className={`relative h-5 shrink-0 border border-[#808080] bg-white ${className}`}>
      <select aria-label={label} className="h-full w-full appearance-none bg-transparent pl-1 outline-none">
        <option>{value}</option>
      </select>
      <span className="pointer-events-none absolute inset-y-0 right-0 flex w-[14px] items-center justify-center border-l border-[#b0b0b0] bg-[#eeeeee]">
        <Arrow />
      </span>
    </div>
  );
}

function TopBar() {
  return (
    <header className="flex h-6 items-center bg-[#3a5590] px-1 text-white">
      <span className="flex h-[15px] w-[14px] items-center justify-center rounded-[3px] border border-white/80 text-xs font-bold">1</span>
      <h1 className="ml-[5px] flex gap-2 text-[13px] whitespace-nowrap">
        {titleItems.map((t) => (
          <span key={t}>{t}</span>
        ))}
      </h1>
      <div className="ml-auto flex items-center gap-[5px] text-[#b4c2e0]">
        <button aria-label="분리">
          <svg viewBox="0 0 14 13" className="h-[13px] w-[14px]" fill="none" stroke="currentColor">
            <path d="M5.5 1.5h8v6h-8zM5 2.500h8M5 5.500h-4.500v6h8v-4M1 6.500h4" />
          </svg>
        </button>
        <button aria-label="접기">
          <svg viewBox="0 0 14 13" className="h-[13px] w-[14px]" fill="none" stroke="currentColor">
            <rect x="1.500" y="9.500" width="11" height="2" rx="1" />
          </svg>
        </button>
        <button aria-label="복사">
          <svg viewBox="0 0 14 13" className="h-[13px] w-[14px]" fill="none" stroke="currentColor" strokeWidth="1.500">
            <path d="M5 1h8v8H5zM5 4H1v8h8V9" />
          </svg>
        </button>
        <button aria-label="고정"><Pin className="h-[14px] w-[14px] fill-current" /></button>
        <button className="font-serif text-base leading-none">T</button>
        <button className="w-3 text-base leading-none">?</button>
        <span className="mx-1 h-4 w-px bg-[#7d90bd]" />
        <button aria-label="최소화" className="flex h-3 w-3 items-end"><span className="h-0.5 w-[10px] bg-current" /></button>
        <button aria-label="이전 크기로">
          <svg viewBox="0 0 14 13" className="h-[13px] w-[14px]" fill="none" stroke="currentColor">
            <path d="M4.500 4V1.500h8v6H10M4 2.500h9M1.500 5.500h8v6h-8zM1 6.500h9" />
          </svg>
        </button>
        <button aria-label="닫기"><X className="h-3 w-3" strokeWidth={1.5} /></button>
      </div>
    </header>
  );
}

function Toolbar() {
  return (
    <div className="flex h-5 items-center gap-px text-xs text-[#222]">
      <Group className="w-5">
        <ToolButton label="메뉴">
          <svg viewBox="0 0 14 14" className="h-[14px] w-[14px]" fill="none" stroke="#444">
            <path d="M4.500 1.500h9v11h-9zM4 3.500h9M1.500 4v9" />
            <path d="M1 5l4 3-4 3z" fill="#444" stroke="none" />
          </svg>
        </ToolButton>
      </Group>
      <Combo value="주" label="종목 구분" className="w-8 text-[#777]" />
      <Group className="w-5"><ToolButton>전</ToolButton></Group>
      <Combo value="476060" label="종목 코드" className="w-[69px]" />
      <Group className="w-[19px]"><ToolButton label="검색"><Search className="h-[14px] w-[14px] text-[#777]" /></ToolButton></Group>
      <Group className="w-[29px]">
        <ToolButton label="소리">
          <svg viewBox="0 0 14 12" className="h-3 w-[14px] shrink-0"><path d="M1 4h3l4-3v10L4 8H1zM10 3h1v2h-1zM10 7h1v2h-1zM12 3h1v2h-1zM12 7h1v2h-1z" fill="#666" /></svg>
        </ToolButton>
        <ToolButton label="소리 옵션"><Arrow /></ToolButton>
      </Group>
      <div className="flex h-5 w-20 shrink-0 items-center overflow-hidden border border-[#b0b0b0] bg-white whitespace-nowrap text-[#800040]">
        <span className="flex h-4 w-4 shrink-0 items-center justify-center bg-[#006064] text-white">신</span>
        <span className="pl-0.5">온코닉테라</span>
      </div>
      <Group className="w-20">
        {['일', '주', '월', '년'].map((t) => <ToolButton key={t}>{t}</ToolButton>)}
      </Group>
      <Group className="w-[55px]">
        {['분', '초', '틱'].map((t) => <ToolButton key={t} active={t === '초'}>{t}</ToolButton>)}
      </Group>
      <Group className="w-[153px] text-[11px]">
        {['1', '5', '10', '60', '180', '300', '600', '3600'].map((t) => (
          <ToolButton key={t} active={t === '5'}>{t}</ToolButton>
        ))}
      </Group>
      <Combo value="5" label="간격" className="w-[38px] pl-1" />
      <input aria-label="표시 개수" defaultValue="4227" className="h-5 w-[30px] border border-[#808080] bg-white px-px outline-none" />
      <span className="w-[33px] text-[#555]">/6300</span>
      <Group className="w-[77px]">
        <ToolButton label="차트 추가">
          <svg viewBox="0 0 16 16" className="h-4 w-4"><path d="M2 3h4v6H2zM3.500 1h1v10h-1zM10 10h2v2h2v2h-2v2h-2v-2H8v-2h2z" fill="#444" /><path d="M8 2h4v5H8z" fill="#999" /></svg>
        </ToolButton>
        <ToolButton label="지표 추가">
          <svg viewBox="0 0 16 16" className="h-4 w-4" fill="none"><path d="M1 6l4-4 4 5 4-5M1 3l4 3 4-3 5 5" stroke="#888" /><path d="M10 9h2v2h2v2h-2v2h-2v-2H8v-2h2z" fill="#444" /></svg>
        </ToolButton>
        <ToolButton label="저장"><Save className="h-4 w-4 text-[#555]" strokeWidth={1.5} /></ToolButton>
        <ToolButton label="설정"><Settings className="h-[14px] w-[14px] text-[#666]" strokeWidth={3} /></ToolButton>
      </Group>
      <label className="ml-px flex items-center gap-[3px]">
        <input type="checkbox" className="h-[13px] w-[13px] appearance-none border border-[#808080] bg-white" />
        D
      </label>
    </div>
  );
}

function QuoteBar() {
  const blue = 'text-[#1548c0]';
  return (
    <div className="flex h-5 items-center gap-0.5 text-xs whitespace-nowrap text-[#111]">
      <div className="flex h-5 w-[750px] shrink-0 border border-[#808080] bg-[#f0f0f0] leading-[18px]">
        <div className={`flex w-[173px] justify-end border-r border-[#b0b0b0] pr-px ${blue}`}>
          <span>40,750</span>
          <span className="flex w-4 items-center justify-center">
            <svg viewBox="0 0 10 9" className="h-[9px] w-[10px]"><path d="M0 0h10L5 9z" fill="#1548c0" /></svg>
          </span>
          <span className="w-12 text-right">3,950</span>
          <span className="w-12 text-right">-8.84%</span>
        </div>
        <div className="flex w-[171px] justify-end gap-[6px] border-r border-[#b0b0b0] pr-px">
          <span className="mr-3">1,672,268</span>
          <span className={blue}>23.50%</span>
          <span>15.11%</span>
        </div>
        <div className="w-[82px] border-r border-[#b0b0b0] pr-px text-right">69,776백만</div>
        <div className="flex w-[140px] justify-between border-r border-[#b0b0b0] pr-[6px] pl-0.5">
          <span>최우선</span>
          <span className={blue}>40,750</span>
          <span className={blue}>40,700</span>
        </div>
        <div className="flex flex-1 justify-between pr-[7px] pl-0.5">
          <span>시</span>
          <span className={blue}>43,050</span>
          <span>고</span>
          <span className={blue}>44,600</span>
          <span>저</span>
          <span className={blue}>40,000</span>
        </div>
      </div>
      <button className="h-5 w-10 border border-[#808080] bg-[#f5cfca]">매수</button>
      <button className="h-5 w-10 border border-[#808080] bg-[#c5ddf3]">매도</button>
    </div>
  );
}

const playIcons = [
  { label: '재생', d: 'M5 2v8l4-4z' },
  { label: '뒤로', d: 'M6 2v8L2 6zM11 2v8L7 6z' },
  { label: '정지', d: 'M3 2h7v8H3z' },
  { label: '앞으로', d: 'M2 2v8l4-4zM7 2v8l4-4z' },
];

const drawIcons = [
  { label: '새 차트', d: 'M7 12.500H1.500v-11h10v6M7.500 8.500h7v6h-7zM11 8v7M7 11.500h8' },
  { label: '겹치기', d: 'M5 9.500H1.500v-8h9V6M5.500 6.500h9v8h-9zM5 7.500h9' },
  { label: '영역', d: 'M1 2.500h2M5 2.500h2M9 2.500h2M13 2.500h2M1 14.500h2M5 14.500h2M9 14.500h2M13 14.500h2M2 11l4-4 3 3 5-5' },
  { label: '십자선', d: 'M4.500 1v14M1 5.500h14M7 7l7 7M7.500 7v5M7 7.500h5' },
  { label: '추세선', d: 'M1 2.500h14M1 11h3l3-6 4 8 1-2h3' },
  { label: '수직선', d: 'M4.500 1v14M2 13l7-9 3 7h3' },
  { label: '빗금', d: 'M1 14L13 1M3 14l5-8 3 7h3' },
  { label: '전체 삭제', d: 'M2 8l6-6h4v5l-5 6H2zM2 8h5l5-6M9.500 10v5M12.500 10v5M14.500 10v5' },
  { label: '비교', d: 'M4.500 5V1.500h10v8H12M1.500 5.500h10v9h-10zM3 12l3-3 2 2 3-4' },
];

function BottomBar() {
  return (
    <footer className="flex h-4 items-center gap-px bg-[#f0f0f0] text-[#444]">
      <button aria-label="왼쪽으로" className="flex h-4 w-4 items-center justify-center border-r border-b border-[#606060] bg-[#f0f0f0]">
        <svg viewBox="0 0 4 8" className="h-2 w-1"><path d="M4 0v8L0 4z" fill="#000" /></svg>
      </button>
      <div className="flex h-4 flex-1 justify-end bg-[#f8f8f8]">
        <div className="h-4 w-[67%] border border-t-white border-r-[#606060] border-b-[#606060] border-l-[#c0c0c0] bg-[#efefef]" />
      </div>
      {playIcons.map((p) => (
        <button key={p.label} aria-label={p.label} className="flex h-4 w-4 items-center justify-center border-r border-b border-[#606060] bg-[#f0f0f0]">
          <svg viewBox="0 0 12 12" className="h-3 w-3"><path d={p.d} fill="#000" /></svg>
        </button>
      ))}
      <svg viewBox="0 0 72 16" className="mr-2 ml-1 h-4 w-[72px]" fill="none" aria-hidden="true">
        <path d="M2 5.500h68" stroke="#888" strokeWidth="2" />
        <path d="M47 2h3v8l-1.500 2L47 10z" fill="#ddd" stroke="#777" />
        <path d="M3.500 14v2M10.500 14v2M17.500 14v2M23.500 14v2M30.500 14v2M37.500 14v2M43.500 14v2M50.500 14v2M57.500 14v2M63.500 14v2M69.500 14v2" stroke="#000" />
      </svg>
      {drawIcons.map((p) => (
        <button key={p.label} aria-label={p.label} className={`flex h-4 w-4 items-center justify-center ${p.label === '십자선' ? 'bg-white' : ''}`}>
          <svg viewBox="0 0 16 16" className="h-4 w-4" fill="none" stroke="#777"><path d={p.d} /></svg>
        </button>
      ))}
      <button aria-label="찾기" className="flex h-4 w-4 items-center justify-center"><Search className="h-[14px] w-[14px]" /></button>
      <button aria-label="축소" className="flex h-4 w-4 items-center justify-center"><span className="h-0.5 w-[10px] bg-[#555]" /></button>
      <button aria-label="확대" className="flex h-4 w-4 items-center justify-center">
        <svg viewBox="0 0 10 10" className="h-[10px] w-[10px]"><path d="M4 0h2v4h4v2H6v4H4V6H0V4h4z" fill="#555" /></svg>
      </button>
      <button className="w-4 text-sm leading-4 font-bold">A</button>
    </footer>
  );
}

export default function App() {
  return (
    <div
      className="min-h-screen bg-black px-px pt-px"
      style={{ fontFamily: FONT }}
    >
      <TopBar />
      <main className="mx-0.5 bg-[#ececec] pb-1">
        <div className="flex flex-col gap-[3px] bg-[#d0d0d0] pt-[5px] pb-[3px] pl-[3px]">
          <Toolbar />
          <QuoteBar />
        </div>
        <div className="pr-0.5 pl-[3px]">
          <Chart />
          <BottomBar />
        </div>
      </main>
    </div>
  );
}
